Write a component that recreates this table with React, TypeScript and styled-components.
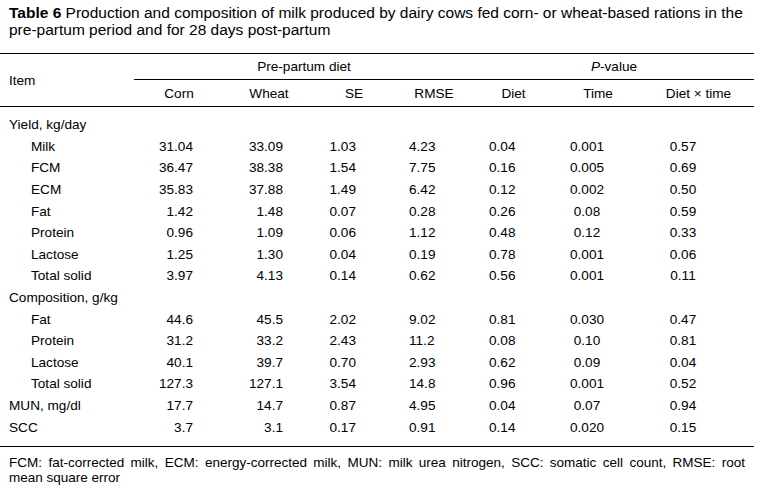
import styled, { createGlobalStyle } from "styled-components";

const GlobalStyle = createGlobalStyle`
	body {
		margin: 0;
		background: #fff;
		color: #000;
		font-family: "Liberation Sans", Arial, sans-serif;
	}
`;

const COLS = "134px 90px 90px 80px 80px 79px 90px 111px";

type Align = "left" | "right" | "center";

// how each value column sits inside its cell
const valueAlign: { align: Align; pl: number; pr: number }[] = [
	{ align: "right", pl: 0, pr: 31 },
	{ align: "right", pl: 0, pr: 31 },
	{ align: "right", pl: 0, pr: 38 },
	{ align: "left", pl: 15, pr: 0 },
	{ align: "left", pl: 15, pr: 0 },
	{ align: "center", pl: 0, pr: 22 },
	{ align: "center", pl: 0, pr: 31 },
];

type Row = { label: string; indent?: boolean; values?: string[] };

const rows: Row[] = [
	{ label: "Yield, kg/day" },
	{ label: "Milk", indent: true, values: ["31.04", "33.09", "1.03", "4.23", "0.04", "0.001", "0.57"] },
	{ label: "FCM", indent: true, values: ["36.47", "38.38", "1.54", "7.75", "0.16", "0.005", "0.69"] },
	{ label: "ECM", indent: true, values: ["35.83", "37.88", "1.49", "6.42", "0.12", "0.002", "0.50"] },
	{ label: "Fat", indent: true, values: ["1.42", "1.48", "0.07", "0.28", "0.26", "0.08", "0.59"] },
	{ label: "Protein", indent: true, values: ["0.96", "1.09", "0.06", "1.12", "0.48", "0.12", "0.33"] },
	{ label: "Lactose", indent: true, values: ["1.25", "1.30", "0.04", "0.19", "0.78", "0.001", "0.06"] },
	{ label: "Total solid", indent: true, values: ["3.97", "4.13", "0.14", "0.62", "0.56", "0.001", "0.11"] },
	{ label: "Composition, g/kg" },
	{ label: "Fat", indent: true, values: ["44.6", "45.5", "2.02", "9.02", "0.81", "0.030", "0.47"] },
	{ label: "Protein", indent: true, values: ["31.2", "33.2", "2.43", "11.2", "0.08", "0.10", "0.81"] },
	{ label: "Lactose", indent: true, values: ["40.1", "39.7", "0.70", "2.93", "0.62", "0.09", "0.04"] },
	{ label: "Total solid", indent: true, values: ["127.3", "127.1", "3.54", "14.8", "0.96", "0.001", "0.52"] },
	{ label: "MUN, mg/dl", values: ["17.7", "14.7", "0.87", "4.95", "0.04", "0.07", "0.94"] },
	{ label: "SCC", values: ["3.7", "3.1", "0.17", "0.91", "0.14", "0.020", "0.15"] },
];

const subHeads = ["Corn", "Wheat", "SE", "RMSE", "Diet", "Time", "Diet \u00d7 time"];

const App = () => {
	return (
		<Page>
			<GlobalStyle />
			<Caption>
				<b>Table 6</b> Production and composition of milk produced by dairy cows fed corn- or wheat-based rations in the
				<br />
				pre-partum period and for 28 days post-partum
			</Caption>
			<Table>
				<Head>
					<ItemHead>Item</ItemHead>
					<GroupHead>Pre-partum diet</GroupHead>
					<GroupHead>
						<i>P</i>-value
					</GroupHead>
					{subHeads.map((h) => (
						<SubHead key={h}>{h}</SubHead>
					))}
				</Head>
				<Body>
					{rows.map((row, i) => (
						<BodyRow key={i}>
							<Label $indent={!!row.indent} $full={!row.values}>
								{row.label}
							</Label>
							{row.values?.map((v, j) => (
								<Value key={j} $align={valueAlign[j].align} $pl={valueAlign[j].pl} $pr={valueAlign[j].pr}>
									{v}
								</Value>
							))}
						</BodyRow>
					))}
				</Body>
			</Table>
			<Footnote>
				<FootLine $stretch>
					FCM: fat-corrected milk, ECM: energy-corrected milk, MUN: milk urea nitrogen, SCC: somatic cell count, RMSE: root
				</FootLine>
				<FootLine>mean square error</FootLine>
			</Footnote>
		</Page>
	);
};

export default App;

const Page = styled.div`
	width: 754px;
	padding-top: 4px;
	background: #fff;
`;

const Caption = styled.div`
	padding: 0 9px;
	font-size: 15.5px;
	line-height: 17px;
	white-space: nowrap;
`;

const Table = styled.div`
	margin-top: 15px;
	border-top: 1px solid #000;
	border-bottom: 1px solid #000;
	font-size: 13.6px;
`;

const Head = styled.div`
	display: grid;
	grid-template-columns: ${COLS};
	grid-template-rows: 26px 26px;
	border-bottom: 1px solid #000;
`;

const ItemHead = styled.div`
	grid-column: 1;
	grid-row: 1 / span 2;
	align-self: center;
	padding-left: 9px;
`;

const GroupHead = styled.div`
	grid-row: 1;
	grid-column: span 4;
	display: flex;
	align-items: center;
	justify-content: center;
	border-bottom: 1px solid #000;
`;

const SubHead = styled.div`
	grid-row: 2;
	display: flex;
	align-items: center;
	justify-content: center;
	white-space: nowrap;
`;

const Body = styled.div`
	padding: 7px 0 8px;
`;

const BodyRow = styled.div`
	display: grid;
	grid-template-columns: ${COLS};
	height: 21.6px;
	align-items: center;
`;

const Label = styled.div<{ $indent: boolean; $full: boolean }>`
	padding-left: ${(p) => (p.$indent ? 31 : 9)}px;
	grid-column: ${(p) => (p.$full ? "1 / -1" : "auto")};
	white-space: nowrap;
`;

const Value = styled.div<{ $align: Align; $pl: number; $pr: number }>`
	text-align: ${(p) => p.$align};
	padding-left: ${(p) => p.$pl}px;
	padding-right: ${(p) => p.$pr}px;
`;

const Footnote = styled.div`
	padding: 8px 9px 0;
	font-size: 13.5px;
	line-height: 15px;
`;

const FootLine = styled.div<{ $stretch?: boolean }>`
	text-align: ${(p) => (p.$stretch ? "justify" : "left")};
	text-align-last: ${(p) => (p.$stretch ? "justify" : "auto")};
	white-space: ${(p) => (p.$stretch ? "normal" : "nowrap")};
`;
